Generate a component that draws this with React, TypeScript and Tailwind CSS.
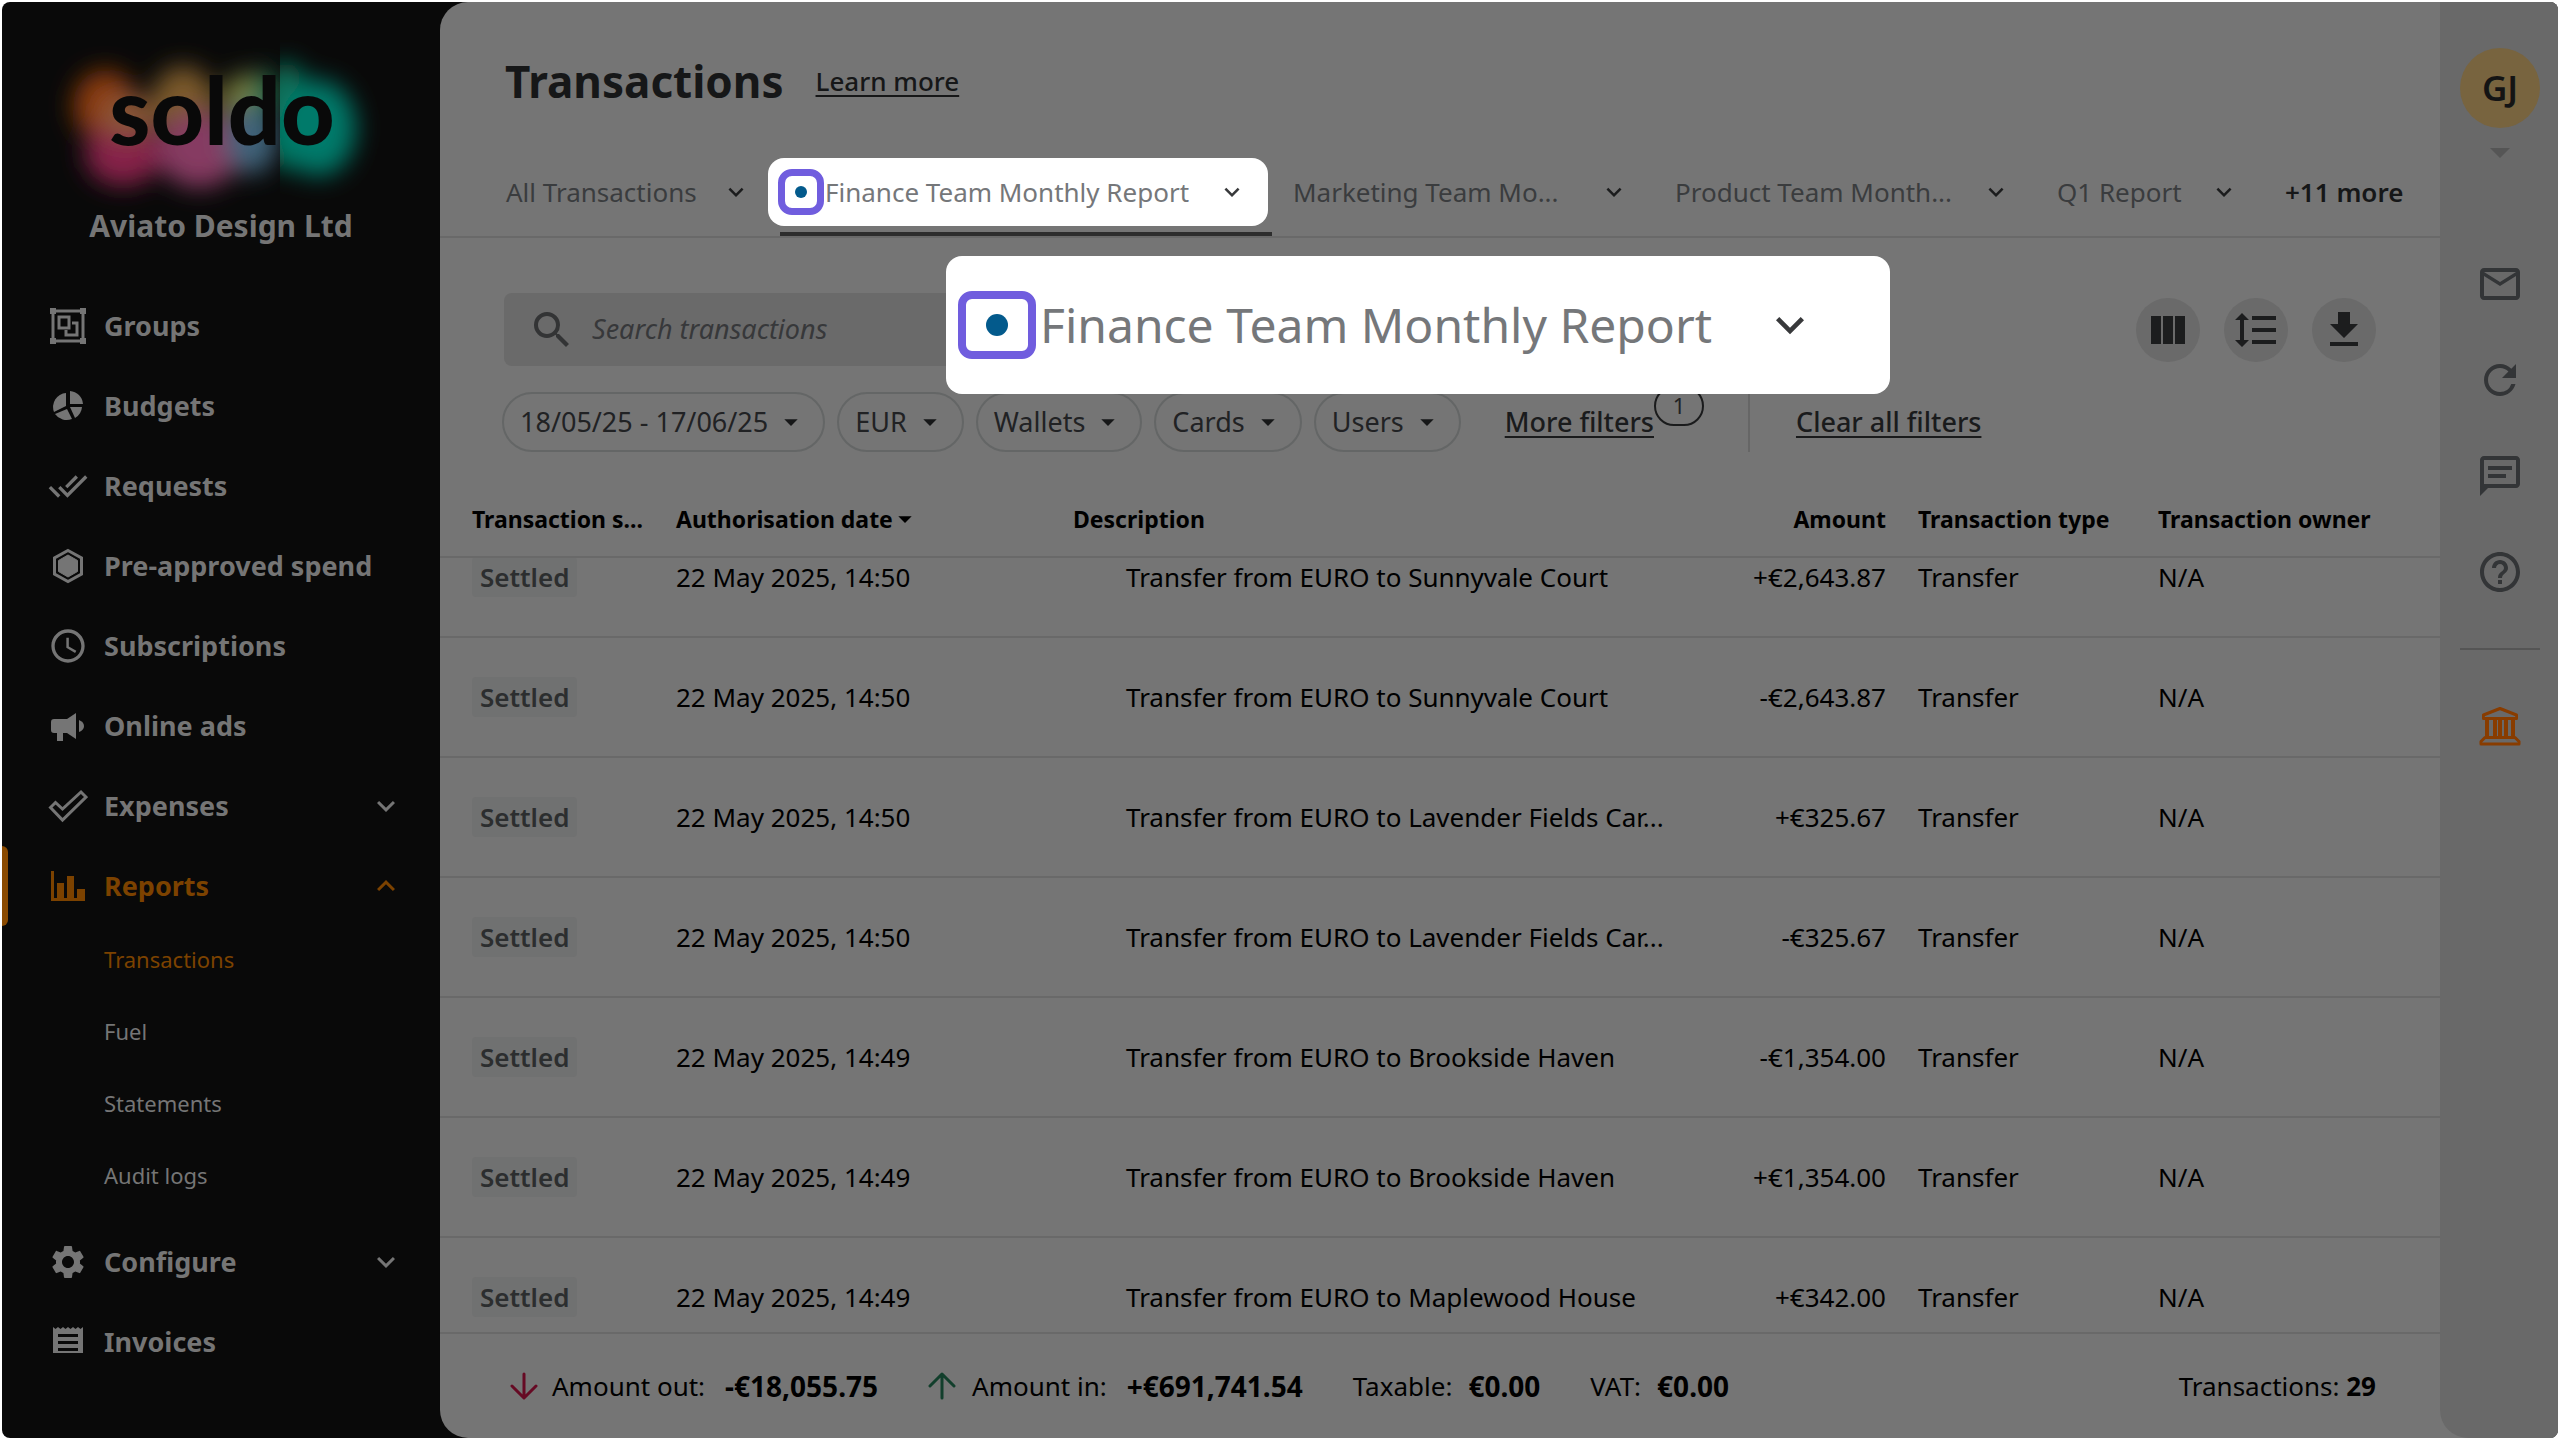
import { useLayoutEffect, useRef, type ReactNode } from "react";
import clsx from "clsx";
import {
  MdAccessTime,
  MdArrowDropDown,
  MdDoneAll,
  MdFileDownload,
  MdFormatLineSpacing,
  MdHelpOutline,
  MdKeyboardArrowDown,
  MdKeyboardArrowUp,
  MdMailOutline,
  MdRefresh,
  MdSearch,
  MdSettings,
} from "react-icons/md";

const GroupsIcon = () => (
  <svg className="w-10 h-10" viewBox="0 0 40 40" fill="none" stroke="currentColor" strokeWidth={3}>
    <path d="M5 5h30v30H5z" />
    <path d="M11 11h10v11H11z" />
    <path d="M24 17h5v12H18v-5" />
    <path d="M2 2h6v6H2zM32 2h6v6h-6zM2 32h6v6H2zM32 32h6v6h-6z" fill="currentColor" stroke="none" />
  </svg>
);

const PieIcon = () => (
  <svg className="w-10 h-10" viewBox="0 0 40 40" fill="currentColor">
    <path d="M22 5a14 14 0 0 1 13 13H22z" />
    <path d="M18 7v13L6 26A14 14 0 0 1 18 7z" />
    <path d="M19 23l5 10A14 14 0 0 1 7 28z" />
    <path d="M22 21h12a14 14 0 0 1-7 11z" />
  </svg>
);

const HexagonIcon = () => (
  <svg className="w-10 h-10" viewBox="0 0 40 40" fill="none" stroke="currentColor">
    <path d="M20 4.500l13.500 7.500v16L20 35.500 6.500 28V12z" strokeWidth={3} />
    <path d="M20 9l9.500 5.500v11L20 31l-9.500-5.500v-11z" fill="currentColor" />
  </svg>
);

const MegaphoneIcon = () => (
  <svg className="w-10 h-10" viewBox="0 0 40 40" fill="currentColor">
    <path d="M6 13h13l9-6v26l-9-6h-4v8H9v-8H6a3 3 0 0 1-3-3v-8a3 3 0 0 1 3-3z" />
    <path d="M31 14q5 2 5 6t-5 6z" />
  </svg>
);

const CheckOutlineIcon = () => (
  <svg className="w-10 h-10" viewBox="0 0 40 40" fill="none" stroke="currentColor" strokeWidth={3}>
    <path d="M2.500 21.500l5-5 7 6.500L33 6l5 5-23.500 23z" />
  </svg>
);

const ReportsIcon = () => (
  <svg className="w-10 h-10" viewBox="0 0 40 40" fill="currentColor">
    <path d="M3 5h3v27h3V17h7v15h3V10h7v22h3V23h8v12H3z" />
  </svg>
);

const ReceiptIcon = () => (
  <svg className="w-10 h-10" viewBox="0 0 40 40" fill="currentColor">
    <path
      fillRule="evenodd"
      d="M5 5l2.500 2 2.500-2 2.500 2L15 5l2.500 2L20 5l2.500 2L25 5l2.500 2L30 5l2.500 2L35 5v26H5zM10 12v3h20v-3zM10 19v3h20v-3zM10 26v3h20v-3z"
    />
  </svg>
);

const ColumnsIcon = () => (
  <svg className="w-12 h-12" viewBox="0 0 48 48" fill="currentColor">
    <path d="M7 10h10v28H7zM19 10h10v28H19zM31 10h10v28H31z" />
  </svg>
);

const ChatIcon = () => (
  <svg className="w-12 h-12" viewBox="0 0 24 24" fill="currentColor">
    <path d="M4 4h16v12H4V4m0-2c-1.100 0-2 .9-2 2v18l4-4h14c1.100 0 2-.9 2-2V4c0-1.100-.9-2-2-2H4z" />
    <path d="M6 7h12v2H6zM6 11h9v2H6z" />
  </svg>
);

const BankIcon = () => (
  <svg className="w-12 h-12" viewBox="0 0 48 48" fill="none" stroke="currentColor" strokeWidth={3}>
    <path d="M24 6.500L7.500 13v3.500h33V13z" strokeLinejoin="round" />
    <path d="M11 17v18M37 17v18M19 17v18M24 17v18M30 17v18" strokeWidth={4} />
    <path d="M9 35.500h30l4 4v2.500H5v-2.500z" strokeLinejoin="round" />
  </svg>
);

const ArrowIcon = ({ up }: { up?: boolean }) => (
  <svg
    className={clsx("w-7 h-7", up ? "text-[#123f2c]" : "text-[#660a24]")}
    viewBox="0 0 28 28"
    fill="none"
    stroke="currentColor"
    strokeWidth={3}
    strokeLinecap="round"
    strokeLinejoin="round"
  >
    {up ? <path d="M14 26V3M2 14L14 2l12 12" /> : <path d="M14 2v23M2 14l12 12 12-12" />}
  </svg>
);

const SoldoLogo = () => (
  <svg className="w-[320px] h-[160px] overflow-visible" viewBox="0 0 320 160" role="img" aria-label="soldo">
    <defs>
      <filter id="glow" x="-30%" y="-40%" width="160%" height="180%">
        <feGaussianBlur stdDeviation="12" />
      </filter>
      <clipPath id="afterStem">
        <rect x="219" y="0" width="140" height="200" />
      </clipPath>
      <clipPath id="beforeStem">
        <rect x="-40" y="0" width="259" height="200" />
      </clipPath>
    </defs>
    <g clipPath="url(#beforeStem)">
      <g filter="url(#glow)">
        <ellipse cx="44" cy="76" rx="32" ry="36" fill="#8a3a0c" />
        <ellipse cx="62" cy="124" rx="38" ry="32" fill="#862048" />
        <ellipse cx="66" cy="86" rx="26" ry="22" fill="#8a5638" />
        <ellipse cx="122" cy="74" rx="32" ry="38" fill="#7c5a2c" />
        <ellipse cx="138" cy="120" rx="42" ry="38" fill="#863a62" />
        <ellipse cx="184" cy="70" rx="22" ry="26" fill="#7c803e" />
        <ellipse cx="204" cy="64" rx="14" ry="24" fill="#1c6e4c" />
        <ellipse cx="190" cy="110" rx="26" ry="34" fill="#40647a" />
      </g>
    </g>
    <g clipPath="url(#afterStem)">
      <g filter="url(#glow)">
        <ellipse cx="224" cy="86" rx="28" ry="54" fill="#0b7058" />
        <ellipse cx="257" cy="98" rx="38" ry="48" fill="#067a6a" />
      </g>
    </g>
    <text
      x="161"
      y="115"
      textAnchor="middle"
      className="font-['Lato',sans-serif] font-black"
      fontSize="93"
      fill="#090909"
    >
      soldo
    </text>
  </svg>
);

type NavItem = { label: string; icon: ReactNode; expandable?: boolean; children?: string[] };

const NAV: NavItem[] = [
  { label: "Groups", icon: <GroupsIcon /> },
  { label: "Budgets", icon: <PieIcon /> },
  { label: "Requests", icon: <MdDoneAll className="w-10 h-10" /> },
  { label: "Pre-approved spend", icon: <HexagonIcon /> },
  { label: "Subscriptions", icon: <MdAccessTime className="w-10 h-10" /> },
  { label: "Online ads", icon: <MegaphoneIcon /> },
  { label: "Expenses", icon: <CheckOutlineIcon />, expandable: true },
  { label: "Reports", icon: <ReportsIcon />, children: ["Transactions", "Fuel", "Statements", "Audit logs"] },
  { label: "Configure", icon: <MdSettings className="w-10 h-10" />, expandable: true },
  { label: "Invoices", icon: <ReceiptIcon /> },
];

const FILTERS = ["18/05/25 - 17/06/25", "EUR", "Wallets", "Cards", "Users"];

const ROWS = [
  ["22 May 2025, 14:50", "Transfer from EURO to Sunnyvale Court", "+€2,643.87"],
  ["22 May 2025, 14:50", "Transfer from EURO to Sunnyvale Court", "-€2,643.87"],
  ["22 May 2025, 14:50", "Transfer from EURO to Lavender Fields Car...", "+€325.67"],
  ["22 May 2025, 14:50", "Transfer from EURO to Lavender Fields Car...", "-€325.67"],
  ["22 May 2025, 14:49", "Transfer from EURO to Brookside Haven", "-€1,354.00"],
  ["22 May 2025, 14:49", "Transfer from EURO to Brookside Haven", "+€1,354.00"],
  ["22 May 2025, 14:49", "Transfer from EURO to Maplewood House", "+€342.00"],
];

const Sidebar = () => (
  <aside className="w-[438px] shrink-0 flex flex-col text-[#757575]">
    <div className="flex flex-col items-center pt-7">
      <SoldoLogo />
      <p className="text-[30px] leading-10 font-bold mt-4">Aviato Design Ltd</p>
    </div>
    <nav className="mt-10">
      {NAV.map((item) => {
        const isOpen = !!item.children;
        return (
          <div key={item.label} className={clsx(isOpen && "mb-2")}>
            <button
              className={clsx(
                "relative flex items-center gap-4 w-full h-20 pl-[46px] pr-9 text-[27px] font-bold",
                isOpen && "text-[#7c4200]"
              )}
            >
              {isOpen && <span className="absolute left-0 top-0 w-[6px] h-20 rounded-r-md bg-[#8a4a00]" />}
              {item.icon}
              <span className="flex-1 text-left">{item.label}</span>
              {item.expandable && <MdKeyboardArrowDown className="w-9 h-9" />}
              {isOpen && <MdKeyboardArrowUp className="w-9 h-9" />}
            </button>
            {item.children?.map((child, i) => (
              <a
                key={child}
                href="#"
                className={clsx("flex items-center h-[72px] pl-[102px] pb-[6px] text-[22px]", i === 0 && "text-[#7c4200]")}
              >
                {child}
              </a>
            ))}
          </div>
        );
      })}
    </nav>
  </aside>
);

const Tab = ({ label, width }: { label: string; width: string }) => (
  <button className="flex items-center h-[68px] gap-[25px] text-[#3a3c3e]">
    <span className={clsx("text-left whitespace-nowrap", width)}>{label}</span>
    <MdKeyboardArrowDown className="w-[30px] h-[30px] text-[#1b1c1d]" />
  </button>
);

const Tabs = () => (
  <div className="flex items-start gap-[46px] h-20 pl-[66px] border-b-2 border-[#696969] text-[26px]">
    <Tab label="All Transactions" width="w-[190px]" />
    <div className="relative -ml-[29px] -mr-[21px]">
      <button className="flex items-center h-[68px] pl-[10px] pr-[21px] rounded-2xl bg-white text-[#75777a]">
        <span className="flex items-center justify-center w-[46px] h-[46px] border-[7px] border-[#705dde] rounded-[14px]">
          <span className="w-3 h-3 rounded-full bg-[#035a8c]" />
        </span>
        <span className="w-[367px] ml-[1px] mr-[25px] text-left whitespace-nowrap">Finance Team Monthly Report</span>
        <MdKeyboardArrowDown className="w-[30px] h-[30px] text-[#38393b]" />
      </button>
      <span className="absolute left-3 -right-1 top-[74px] h-1 bg-[#2d2d2d]" />
    </div>
    <Tab label="Marketing Team Mo..." width="w-[281px]" />
    <Tab label="Product Team Month..." width="w-[281px]" />
    <Tab label="Q1 Report" width="w-[127px]" />
    <button className="h-[68px] font-semibold text-[#161718] whitespace-nowrap">+11 more</button>
  </div>
);

const Toolbar = () => (
  <div className="flex items-center pl-[64px] pr-16">
    <div className="flex items-center w-[800px] h-[73px] pl-6 gap-4 rounded-lg bg-[#6a6a6a]">
      <MdSearch className="w-12 h-12 text-[#333435]" />
      <input
        type="text"
        aria-label="Search transactions"
        placeholder="Search transactions"
        className="flex-1 bg-transparent text-[27px] italic outline-none placeholder:text-[#37383a]"
      />
    </div>
    <div className="flex gap-6 ml-auto text-[#1c1d1e]">
      <button aria-label="Columns" className="flex items-center justify-center w-16 h-16 rounded-full bg-[#6a6a6a]">
        <ColumnsIcon />
      </button>
      <button aria-label="Row height" className="flex items-center justify-center w-16 h-16 rounded-full bg-[#6a6a6a]">
        <MdFormatLineSpacing className="w-12 h-12" />
      </button>
      <button aria-label="Download" className="flex items-center justify-center w-16 h-16 rounded-full bg-[#6a6a6a]">
        <MdFileDownload className="w-12 h-12" />
      </button>
    </div>
  </div>
);

const Filters = () => (
  <div className="flex items-center gap-3 pl-[62px] mt-[26px] h-[60px] text-[27px] text-[#212224]">
    {FILTERS.map((filter) => (
      <button key={filter} className="flex items-center h-[60px] px-4 gap-[7px] border-2 border-[#646666] rounded-full">
        {filter}
        <MdArrowDropDown className="w-8 h-8 text-[#161718]" />
      </button>
    ))}
    <div className="relative ml-8">
      <a href="#" className="font-medium underline underline-offset-4 text-[#1a1b1c]">More filters</a>
      <span className="absolute left-full -top-4 flex items-center justify-center w-[50px] h-10 border-2 border-[#1a1b1c] rounded-full text-[22px]">
        1
      </span>
    </div>
    <span className="w-[2px] h-[60px] ml-[82px] bg-[#666666]" />
    <a href="#" className="ml-[34px] font-medium underline underline-offset-4 text-[#1a1b1c]">Clear all filters</a>
  </div>
);

const TransactionsTable = () => {
  const scroller = useRef<HTMLDivElement>(null);

  // The list opens part of a row down
  useLayoutEffect(() => {
    if (scroller.current) scroller.current.scrollTop = 40;
  }, []);

  return (
    <div ref={scroller} className="flex-1 min-h-0 overflow-hidden mt-[26px]">
      <table className="w-full table-fixed border-separate border-spacing-0 text-left text-[26px] text-black">
        <colgroup>
          <col className="w-[236px]" />
          <col className="w-[397px]" />
          <col />
          <col className="w-[196px]" />
          <col className="w-[272px]" />
          <col className="w-[282px]" />
        </colgroup>
        <thead className="sticky top-0 z-10 bg-[#757575] text-[23px]">
          <tr className="h-20">
            <th className="border-b-2 border-[#696969] pt-1 pl-8 whitespace-nowrap">Transaction s...</th>
            <th className="border-b-2 border-[#696969] pt-1">
              <span className="flex items-center">
                Authorisation date
                <MdArrowDropDown className="w-8 h-8 -ml-1" />
              </span>
            </th>
            <th className="border-b-2 border-[#696969] pt-1">Description</th>
            <th className="border-b-2 border-[#696969] pt-1 text-right">Amount</th>
            <th className="border-b-2 border-[#696969] pt-1 pl-8">Transaction type</th>
            <th className="border-b-2 border-[#696969] pt-1">Transaction owner</th>
          </tr>
        </thead>
        <tbody>
          {ROWS.map(([date, description, amount], i) => (
            <tr key={i} className="h-[120px]">
              <td className="border-b-2 border-[#696969] pl-8">
                <span className="inline-flex items-center h-10 px-2 rounded bg-[#707171] font-semibold text-[#2c2e2f]">
                  Settled
                </span>
              </td>
              <td className="border-b-2 border-[#696969]">{date}</td>
              <td className="border-b-2 border-[#696969] pl-[53px] whitespace-nowrap">{description}</td>
              <td className="border-b-2 border-[#696969] text-right">{amount}</td>
              <td className="border-b-2 border-[#696969] pl-8">Transfer</td>
              <td className="border-b-2 border-[#696969]">N/A</td>
            </tr>
          ))}
        </tbody>
      </table>
    </div>
  );
};

const Summary = () => (
  <footer className="flex items-center gap-[50px] h-[106px] pl-[70px] pr-16 border-t-2 border-[#696969] text-[26px] text-black">
    <p className="flex items-center">
      <ArrowIcon />
      <span className="ml-[14px]">Amount out:</span>
      <b className="ml-5 text-[28px]">-€18,055.75</b>
    </p>
    <p className="flex items-center">
      <ArrowIcon up />
      <span className="ml-4">Amount in:</span>
      <b className="ml-5 text-[28px]">+€691,741.54</b>
    </p>
    <p className="flex items-center">
      Taxable: <b className="ml-4 text-[28px]">€0.00</b>
    </p>
    <p className="flex items-center">
      VAT: <b className="ml-4 text-[28px]">€0.00</b>
    </p>
    <p className="ml-auto">
      Transactions: <b>29</b>
    </p>
  </footer>
);

const Rail = () => (
  <aside className="w-[118px] shrink-0 bg-[#757575]">
    <div className="flex flex-col items-center h-full pt-[46px] pl-[2px] rounded-bl-[28px] bg-[#696969] text-[#333537]">
      <button className="flex flex-col items-center">
        <span className="flex items-center justify-center w-20 h-20 rounded-full bg-[#78643f] text-[35px] font-semibold text-[#141414]">
          GJ
        </span>
        <MdArrowDropDown className="w-12 h-12 text-[#555555]" />
      </button>
      <div className="flex flex-col gap-12 mt-[84px]">
        <button aria-label="Messages"><MdMailOutline className="w-12 h-12" /></button>
        <button aria-label="Refresh"><MdRefresh className="w-12 h-12" /></button>
        <button aria-label="Chat"><ChatIcon /></button>
        <button aria-label="Help"><MdHelpOutline className="w-12 h-12" /></button>
      </div>
      <hr className="w-20 mt-[52px] border-t-2 border-[#555555]" />
      <button aria-label="Bank" className="mt-[52px] text-[#883c00]">
        <BankIcon />
      </button>
    </div>
  </aside>
);

const TabCallout = () => (
  <div className="absolute left-[506px] top-[254px] z-20 flex items-center w-[944px] h-[138px] pl-3 rounded-2xl bg-white text-[#75777a]">
    <span className="flex items-center justify-center w-[78px] h-[68px] border-8 border-[#705dde] rounded-[14px]">
      <span className="w-[22px] h-[22px] rounded-full bg-[#035a8c]" />
    </span>
    <span className="w-[682px] ml-1 text-[48px] whitespace-nowrap">Finance Team Monthly Report</span>
    <MdKeyboardArrowDown className="w-14 h-14 ml-10 text-[#38393b]" />
  </div>
);

export default function App() {
  return (
    <div className="h-screen p-[2px] bg-white font-['Noto_Sans',sans-serif]">
      <div className="flex h-full rounded-lg overflow-hidden bg-[#090909]">
        <Sidebar />
        <main className="relative flex flex-col flex-1 min-w-0 rounded-l-[28px] bg-[#757575]">
          <header className="flex items-center gap-8 h-[156px] pl-[65px] pt-[2px] text-[#161718]">
            <h1 className="text-[44px] font-bold">Transactions</h1>
            <a href="#" className="text-[26px] font-medium underline underline-offset-4">Learn more</a>
          </header>
          <Tabs />
          <div className="pt-[55px]">
            <Toolbar />
            <Filters />
          </div>
          <TransactionsTable />
          <Summary />
          <TabCallout />
        </main>
        <Rail />
      </div>
    </div>
  );
}
